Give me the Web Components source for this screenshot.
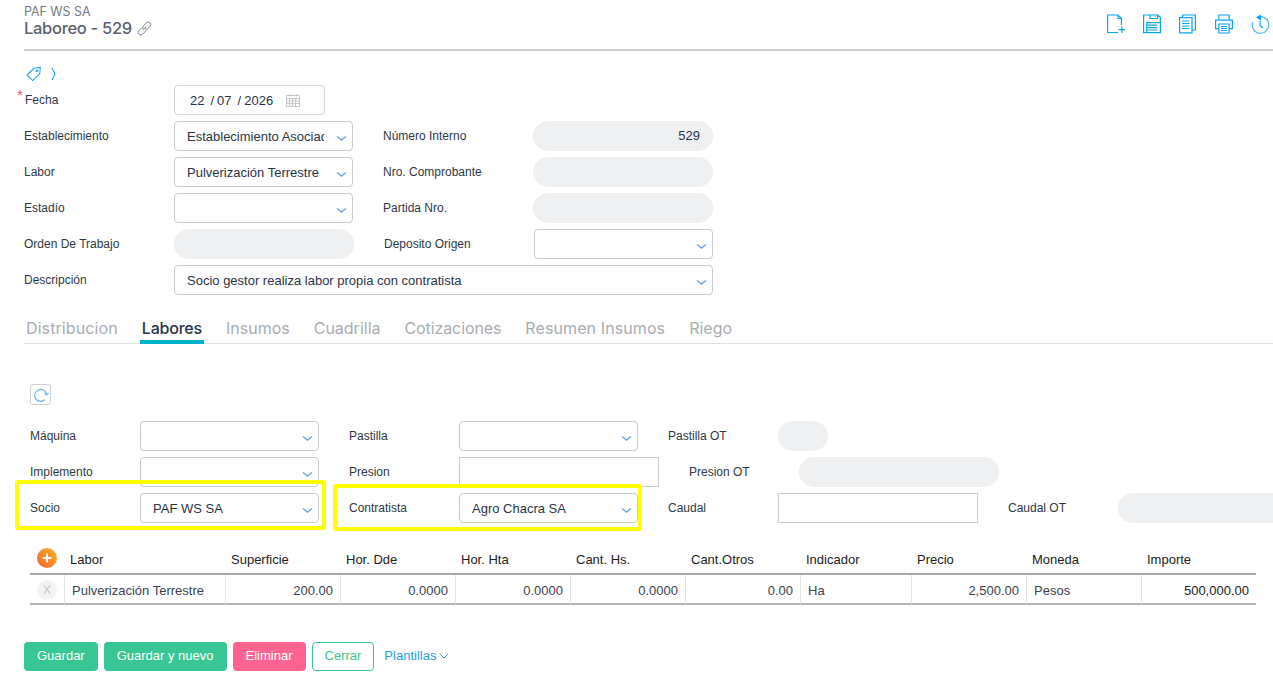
<!DOCTYPE html>
<html lang="es">
<head>
<meta charset="utf-8">
<title>Laboreo - 529</title>
<style>
  html, body { margin: 0; padding: 0; height: 100%; background: #fff; overflow: hidden; }
  body { font-family: "Liberation Sans", Arial, sans-serif; color: #2b3445; }
</style>
</head>
<body>
<app-page></app-page>

<template id="tpl-page">
  <style>
    :host { display: block; width: 1273px; height: 678px; overflow: hidden; position: relative; box-sizing: border-box; padding-left: 24px; }
    .main { display: flex; flex-direction: column; gap: 6px; margin-top: 1px; }
    .tagbar { display: flex; align-items: center; gap: 9px; height: 20px; margin: 13px 0 0 2px; }
    .sub { margin-left: 6px; }
    .refresh { margin: 40px 0 16px; }
    .rows { display: flex; flex-direction: column; gap: 6px; width: 1400px; }
    .row { display: flex; }
    .row > * { margin-right: 30px; }
    x-grid { margin: 22px 17px 0 6px; }
    .actions { display: flex; align-items: center; gap: 6px; margin-top: 37px; }
    .yellow { position: absolute; border: 4px solid #ffff00; border-radius: 3px; box-sizing: border-box; pointer-events: none; }
  </style>
  <page-head></page-head>
  <div class="tagbar">
    <svg width="16" height="16" viewBox="0 0 16 16" fill="none" stroke="#21a6ee" stroke-width="1.1"><path d="M1 9L8 2.300l6.300-.8-.6 6.300L6.600 14.600z"/><circle cx="11" cy="4.900" r=".9"/></svg>
    <svg width="6" height="14" viewBox="0 0 6 14" fill="none" stroke="#21a6ee" stroke-width="1.1"><path d="M1 1l3 6-3 6"/></svg>
  </div>
  <div class="main">
    <div class="row">
      <x-field label="Fecha" required><date-box></date-box></x-field>
    </div>
    <div class="row">
      <x-field label="Establecimiento"><x-select w="179">Establecimiento Asociado</x-select></x-field>
      <x-field label="Número Interno" lw="150"><x-pill w="180" align="right">529</x-pill></x-field>
    </div>
    <div class="row">
      <x-field label="Labor"><x-select w="179">Pulverización Terrestre</x-select></x-field>
      <x-field label="Nro. Comprobante" lw="150"><x-pill w="180"></x-pill></x-field>
    </div>
    <div class="row">
      <x-field label="Estadío"><x-select w="179"></x-select></x-field>
      <x-field label="Partida Nro." lw="150"><x-pill w="180"></x-pill></x-field>
    </div>
    <div class="row">
      <x-field label="Orden De Trabajo"><x-pill w="180"></x-pill></x-field>
      <x-field label="Deposito Origen" lw="150"><x-select w="179"></x-select></x-field>
    </div>
    <div class="row">
      <x-field label="Descripción"><x-select w="539">Socio gestor realiza labor propia con contratista</x-select></x-field>
    </div>
  </div>
  <x-tabs></x-tabs>
  <div class="sub">
    <div class="refresh"><refresh-btn></refresh-btn></div>
    <div class="rows">
      <div class="row">
        <x-field label="Máquina" lw="110"><x-select w="179"></x-select></x-field>
        <x-field label="Pastilla" lw="110"><x-select w="179"></x-select></x-field>
        <x-field label="Pastilla OT" lw="110"><x-pill w="50"></x-pill></x-field>
      </div>
      <div class="row">
        <x-field label="Implemento" lw="110"><x-select w="179"></x-select></x-field>
        <x-field label="Presion" lw="110"><x-input w="200"></x-input></x-field>
        <x-field label="Presion OT" lw="110"><x-pill w="200"></x-pill></x-field>
      </div>
      <div class="row">
        <x-field label="Socio" lw="110"><x-select w="179">PAF WS SA</x-select></x-field>
        <x-field label="Contratista" lw="110"><x-select w="179">Agro Chacra SA</x-select></x-field>
        <x-field label="Caudal" lw="110"><x-input w="200"></x-input></x-field>
        <x-field label="Caudal OT" lw="110"><x-pill w="200"></x-pill></x-field>
      </div>
    </div>
  </div>
  <x-grid></x-grid>
  <div class="actions">
    <x-button kind="green">Guardar</x-button>
    <x-button kind="green">Guardar y nuevo</x-button>
    <x-button kind="pink">Eliminar</x-button>
    <x-button kind="outline">Cerrar</x-button>
    <x-link>Plantillas</x-link>
  </div>
  <div class="yellow" style="left:15px;top:480px;width:311px;height:50px"></div>
  <div class="yellow" style="left:333px;top:484px;width:309px;height:47px"></div>
</template>

<template id="tpl-head">
  <style>
    :host { display: flex; justify-content: space-between; height: 51px; box-sizing: border-box; border-bottom: 2px solid #cfcfd3; font-family: "Inter", "Liberation Sans", sans-serif; }
    .co { font-size: 12.4px; line-height: 14px; color: #737a85; padding-top: 5px; }
    .title { display: flex; align-items: center; gap: 4px; font-size: 16.5px; font-weight: 500; line-height: 18px; color: #5a626e; letter-spacing: -.3px; }
    .tools { display: flex; gap: 18.5px; padding-top: 14px; padding-right: 3px; }
    .tools svg { display: block; }
    .tools svg:first-child { margin-right: -1px; }
  </style>
  <div>
    <div class="co">PAF WS SA</div>
    <div class="title">Laboreo - 529
      <svg width="17" height="17" viewBox="0 0 17 17" fill="none" stroke="#7d848e" stroke-width="1"><path d="M7 10.200l3.400-3.400M6 7.600l-3 3a2.500 2.500 0 0 0 3.600 3.600l3-3a2.500 2.500 0 0 0 0-3.300M11 9.400l3-3a2.500 2.500 0 0 0-3.600-3.600l-3 3a2.500 2.500 0 0 0 0 3.300"/></svg>
    </div>
  </div>
  <div class="tools">
    <svg width="18" height="20" viewBox="0 0 18 20" fill="none" stroke="#0aa7ea" stroke-width="1.2"><path d="M11 18.500H.6V1H11l3.500 3.500V11M11 1v3.500h3.500M15 12.500v6.500M11.500 15.700H18"/></svg>
    <svg width="18" height="20" viewBox="0 0 18 20" fill="none" stroke="#0aa7ea" stroke-width="1.200"><path d="M.6 1h14.300L17.400 3.400V18.600H.6zM3.800 18.600V8.600H17.400M3.800 11.200h10.500M3.800 13.600h10.500M3.800 16h10.500M7 1v3.500h7.500V1M11.800 2.500h1"/></svg>
    <svg width="17" height="20" viewBox="0 0 17 20" fill="none" stroke="#0aa7ea" stroke-width="1.200"><path d="M3.600 3.200V1h12.800v15H13M.6 3.600h12.400v15.200H.6zM3 7h7.500M3 9.500h7.500M3 12h7.500M3 14.500h7.500"/></svg>
    <svg width="18" height="20" viewBox="0 0 18 20" fill="none" stroke="#0aa7ea" stroke-width="1.200"><path d="M3.800 6V1h10.400v5M3.800 14.600H.6V6.200h16.800v8.400h-3.200M3.800 10h10.400v9H3.800zM6 12.500h6M6 14.500h6M6 16.500h6M14.800 8h.8"/></svg>
    <svg width="19" height="20" viewBox="0 0 19 20" fill="none" stroke="#41b6f0" stroke-width="1.200"><path d="M6 3.400a8.300 8.300 0 1 1-4.400 4.800"/><path d="M9 7v4.500l3 2.500" stroke="#0aa7ea"/><path d="M10 .4v6L5 3.400z" fill="#0aa7ea" stroke="none"/></svg>
  </div>
</template>

<template id="tpl-field">
  <style>
    :host { display: flex; align-items: center; height: 30px; font-size: 12px; color: #2f3848; }
    :host([required]) .txt { margin-left: 1px; }
    .lab { width: var(--lw, 150px); flex: none; position: relative; }
    .req { position: absolute; left: -7px; top: -5px; color: #f0556f; font-size: 15px; line-height: 14px; }
  </style>
  <div class="lab"><span class="req" hidden>*</span><span class="txt"></span></div>
  <slot></slot>
</template>

<template id="tpl-select">
  <style>
    :host { display: block; height: 30px; box-sizing: border-box; border: 1px solid #c9cbd0; border-radius: 4px; background: #fff; position: relative; font-size: 13px; line-height: 30px; color: #2b3445; }
    .val { margin: 0 28px 0 12px; white-space: nowrap; overflow: hidden; height: 28px; line-height: 29px; }
    svg { position: absolute; right: 5px; top: 13px; }
  </style>
  <div class="val"><slot></slot></div>
  <svg width="11" height="7" viewBox="0 0 11 7" fill="none" stroke="#6fa8dc" stroke-width="1.500"><path d="M1 1.500l4.500 3.500 4.500-3.500"/></svg>
</template>

<template id="tpl-pill">
  <style>
    :host { display: block; height: 30px; border-radius: 15px; background: #eff0f2; box-sizing: border-box; padding: 0 13px; font-size: 13px; line-height: 30px; color: #2b3445; }
  </style>
  <slot></slot>
</template>

<template id="tpl-input">
  <style>
    :host { display: block; height: 30px; box-sizing: border-box; border: 1px solid #c9cbd0; background: #fff; }
  </style>
</template>

<template id="tpl-date">
  <style>
    :host { display: flex; align-items: center; width: 151px; height: 30px; box-sizing: border-box; border: 1px solid #d3d5d9; border-radius: 4px; padding-left: 15px; font-size: 13px; color: #2b3445; }
    span { white-space: pre; }
    svg { margin-left: 13px; }
  </style>
  <span>22</span><span style="margin-left:6px">/</span><span style="margin-left:3px">07</span><span style="margin-left:6px">/</span><span style="margin-left:3px">2026</span>
  <svg width="14" height="14" viewBox="0 0 14 14" fill="none" stroke="#c4c7cb" stroke-width="1"><path d="M.5 2.500h13v11H.5zM.5 5.500h13M3.500 1v2.500M10.500 1v2.500M3.500 5.500v8M6.500 5.500v8M9.500 5.500v8M.5 8h13M.5 10.500h13"/></svg>
</template>

<template id="tpl-tabs">
  <style>
    :host { display: flex; gap: 20px; height: 26px; margin-top: 23px; box-sizing: border-box; border-bottom: 1px solid #dfe0e3; font-family: "Inter", "Liberation Sans", sans-serif; font-size: 16px; font-weight: 400; }
    div { padding: 0 2px; height: 25px; line-height: 20px; color: #a9adb3; box-sizing: content-box; white-space: nowrap; }
    .on { color: #27334a; font-weight: 500; letter-spacing: -.2px; border-bottom: 4px solid #00b1cd; height: 22px; margin-bottom: -1px; }
  </style>
  <div style="letter-spacing:.1px">Distribucion</div><div class="on">Labores</div><div>Insumos</div><div>Cuadrilla</div><div style="letter-spacing:-.1px">Cotizaciones</div><div style="letter-spacing:.1px">Resumen Insumos</div><div>Riego</div>
</template>

<template id="tpl-refresh">
  <style>
    :host { display: flex; align-items: center; justify-content: center; width: 21px; height: 21px; box-sizing: border-box; border: 1px solid #ccd0d6; border-radius: 3px; }
  </style>
  <svg width="16" height="16" viewBox="0 0 16 16" fill="none" stroke="#6bb2f0" stroke-width="1.100"><path d="M12 12.500A6 6 0 1 1 13.500 7"/><path d="M11.200 6l2.300 2.300L15.800 6"/></svg>
</template>

<template id="tpl-grid">
  <style>
    :host { display: block; font-size: 13px; color: #2b3445; }
    .g { display: grid; grid-template-columns: 34px 161px repeat(5, 115px) 111px 115px 115px 115px; }
    .body { grid-template-columns: 35px 161px repeat(5, 115px) 111px 115px 115px 114px; }
    .head > div { height: 30px; line-height: 30px; padding-left: 6px; border-bottom: 2px solid #a9a9a9; box-sizing: border-box; color: #222; position: relative; }
    .head > .add { padding: 0; }
    .add svg { position: absolute; left: 7px; top: 3px; }
    .body > div { height: 30px; line-height: 31px; box-sizing: border-box; border-bottom: 2px solid #b5b5b5; border-right: 1px solid #e3e3e3; padding: 0 7px; color: #3b4350; white-space: nowrap; }
    .body > .r { text-align: right; }
    .body > .last { border-right: 0; }
    .body > .ink { color: #222; }
    .del { position: relative; padding: 0 !important; }
    .del span { position: absolute; left: 7px; top: 5px; width: 20px; height: 20px; border-radius: 50%; background: #f3f3f4; color: #c5c5c8; font-size: 12px; line-height: 20px; text-align: center; }
  </style>
  <div class="g head">
    <div class="add"><svg width="20" height="20" viewBox="0 0 20 20"><defs><linearGradient id="o" x1="0" y1="1" x2="1" y2="0"><stop offset="0" stop-color="#f2622e"/><stop offset="1" stop-color="#fdb52c"/></linearGradient></defs><circle cx="10" cy="10" r="10" fill="url(#o)"/><path d="M10 5.500v9M5.500 10h9" stroke="#fff" stroke-width="1.800"/></svg></div>
    <div>Labor</div><div>Superficie</div><div>Hor. Dde</div><div>Hor. Hta</div><div>Cant. Hs.</div><div>Cant.Otros</div><div>Indicador</div><div>Precio</div><div>Moneda</div><div>Importe</div>
  </div>
  <div class="g body">
    <div class="del"><span>X</span></div>
    <div>Pulverización Terrestre</div>
    <div class="r">200.00</div><div class="r">0.0000</div><div class="r">0.0000</div><div class="r">0.0000</div><div class="r">0.00</div>
    <div>Ha</div><div class="r">2,500.00</div><div>Pesos</div><div class="r last ink">500,000.00</div>
  </div>
</template>

<template id="tpl-button">
  <style>
    :host { display: block; height: 29px; box-sizing: border-box; padding: 0 13px; border-radius: 4px; font-size: 13px; line-height: 27px; color: #fff; white-space: nowrap; }
    :host([kind=green]) { background: #38c695; }
    :host([kind=pink]) { background: #ff6491; }
    :host([kind=outline]) { border: 1px solid #38c695; color: #38c695; padding: 0 12px; line-height: 26px; background: #fff; }
  </style>
  <slot></slot>
</template>

<template id="tpl-link">
  <style>
    :host { display: flex; align-items: center; gap: 3px; margin: 0 0 2px 4px; font-size: 13px; color: #1e9fec; }
  </style>
  <slot></slot>
  <svg width="10" height="6" viewBox="0 0 10 6" fill="none" stroke="#1e9fec" stroke-width="1"><path d="M.8 1l4.200 4 4.200-4"/></svg>
</template>

<script>
// one class per template, all the same apart from a few attributes
function plain(name, tplId, setup){
    const tpl = document.getElementById(tplId);
    customElements.define(name, class extends HTMLElement{
        constructor(){
            super();
            this.attachShadow({mode: "open"});
            this.shadowRoot.appendChild(tpl.content.cloneNode(true));
        }
        connectedCallback(){
            if(setup) setup(this);
        }
    });
}

const sized = el => {
    if(el.hasAttribute("w")) el.style.width = el.getAttribute("w") + "px";
    if(el.getAttribute("align") === "right") el.style.textAlign = "right";
};

plain("page-head", "tpl-head");
plain("x-select", "tpl-select", sized);
plain("x-pill", "tpl-pill", sized);
plain("x-input", "tpl-input", sized);
plain("date-box", "tpl-date");
plain("x-tabs", "tpl-tabs");
plain("refresh-btn", "tpl-refresh");
plain("x-grid", "tpl-grid");
plain("x-button", "tpl-button");
plain("x-link", "tpl-link");
plain("x-field", "tpl-field", el => {
    el.shadowRoot.querySelector(".txt").textContent = el.getAttribute("label");
    if(el.hasAttribute("lw")) el.style.setProperty("--lw", el.getAttribute("lw") + "px");
    if(el.hasAttribute("required")) el.shadowRoot.querySelector(".req").hidden = false;
});
plain("app-page", "tpl-page");
</script>
</body>
</html>
